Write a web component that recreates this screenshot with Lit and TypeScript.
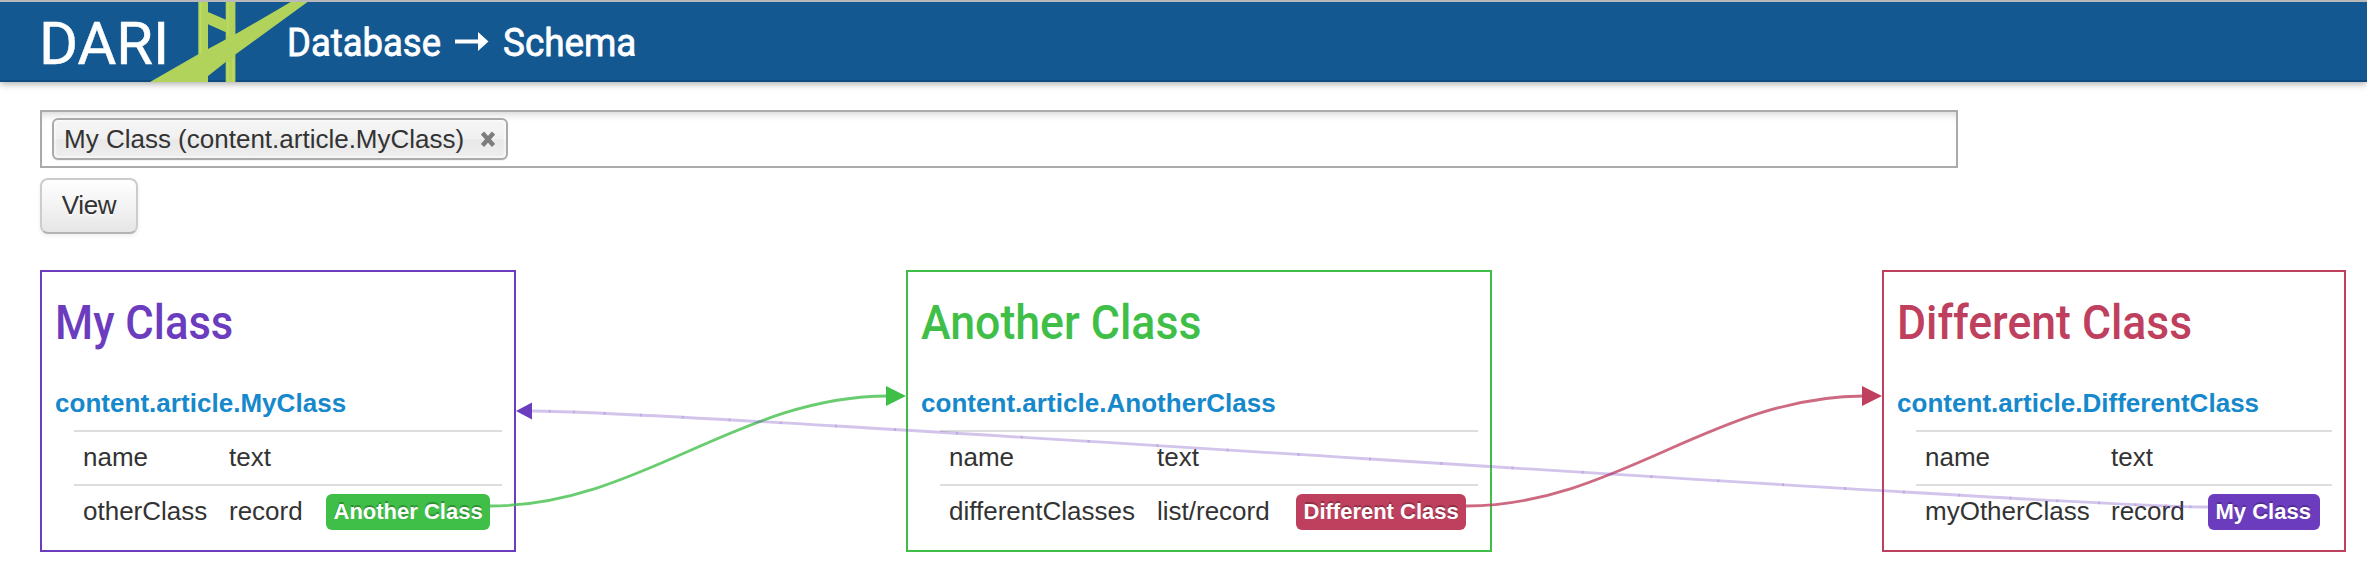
import { LitElement, html, svg, css } from "lit";
import { customElement, property } from "lit/decorators.js";

interface Field {
  name: string;
  type: string;
  target?: { label: string; tone: string };
}

interface SchemaClass {
  tone: string;
  title: string;
  path: string;
  fields: Field[];
}

const CLASSES: SchemaClass[] = [
  {
    tone: "purple",
    title: "My Class",
    path: "content.article.MyClass",
    fields: [
      { name: "name", type: "text" },
      { name: "otherClass", type: "record", target: { label: "Another Class", tone: "green" } },
    ],
  },
  {
    tone: "green",
    title: "Another Class",
    path: "content.article.AnotherClass",
    fields: [
      { name: "name", type: "text" },
      { name: "differentClasses", type: "list/record", target: { label: "Different Class", tone: "red" } },
    ],
  },
  {
    tone: "red",
    title: "Different Class",
    path: "content.article.DifferentClass",
    fields: [
      { name: "name", type: "text" },
      { name: "myOtherClass", type: "record", target: { label: "My Class", tone: "purple" } },
    ],
  },
];

@customElement("schema-card")
export class SchemaCard extends LitElement {
  @property({ attribute: false }) data!: SchemaClass;

  static styles = css`
    :host { display: block; }
    .card {
      box-sizing: border-box;
      height: 282px;
      border: 2px solid var(--tone);
      padding: 23px 12px 0 13px;
      color: #333;
      font: 26px/36px "Liberation Sans", Arial, sans-serif;
      white-space: nowrap;
    }
    .purple { --tone: #6c3cbf; --c1: 146px; --c2: 97px; --sx: 0.89; width: 476px; }
    .green { --tone: #3fbf48; --c1: 208px; --c2: 139px; --sx: 0.911; width: 586px; }
    .red { --tone: #bf405e; --c1: 186px; --c2: 97px; --sx: 0.908; width: 464px; }
    .title {
      margin: 0;
      color: var(--tone);
      font: 500 49px/56px Roboto, sans-serif;
      transform: scaleX(var(--sx));
      transform-origin: 0 0;
    }
    .path {
      margin: 34px 0 0;
      color: #1688cc;
      font-weight: bold;
      height: 45px;
      line-height: 36px;
      letter-spacing: 0.03px;
    }
    .row {
      display: grid;
      grid-template-columns: var(--c1) var(--c2) max-content;
      box-sizing: border-box;
      height: 54px;
      margin-left: 19px;
      padding: 7px 0 0 9px;
      border-top: 2px solid #ddd;
    }
    .badge {
      box-sizing: border-box;
      height: 36px;
      margin-top: 1px;
      padding: 0 7.5px;
      border-radius: 6px;
      color: #fff;
      font-size: 22px;
      font-weight: bold;
      line-height: 36px;
      text-shadow: 0 -2px 0 rgba(0, 0, 0, 0.25);
    }
    .to-purple { background: #6c3cbf; padding-right: 9px; }
    .to-green { background: #3fbf48; }
    .to-red { background: #bf405e; }
  `;

  render() {
    const d = this.data;
    return html`<section class="card ${d.tone}">
      <h2 class="title">${d.title}</h2>
      <div class="path">${d.path}</div>
      ${d.fields.map(
        (f) => html`<div class="row">
          <span>${f.name}</span><span>${f.type}</span>
          ${f.target ? html`<span class="badge to-${f.target.tone}">${f.target.label}</span>` : ""}
        </div>`
      )}
    </section>`;
  }
}

const cubic = (a: number, b: number, c: number, d: number, t: number) =>
  (1 - t) ** 3 * a + 3 * (1 - t) ** 2 * t * b + 3 * (1 - t) * t * t * c + t ** 3 * d;

// Joints of the long link, evenly spaced along the curve parameter.
const JOINTS = Array.from({ length: 31 }, (_, i) => {
  const t = (i + 1) / 32;
  return { x: cubic(532, 682, 2058, 2208, t), y: cubic(411, 411, 507, 507, t) };
});

@customElement("app-root")
export class AppRoot extends LitElement {
  static styles = css`
    :host {
      display: block;
      position: relative;
      height: 570px;
      overflow: hidden;
      background: #fff;
      color: #333;
      font: 26px/36px "Liberation Sans", Arial, sans-serif;
    }
    .header {
      box-sizing: border-box;
      display: flex;
      height: 82px;
      border-top: 2px solid #b9b9b9;
      background: #145892;
      box-shadow: inset 0 -2px 0 #0f4b81, 0 1px 8px rgba(0, 0, 0, 0.4);
      color: #fff;
      font-family: Roboto, sans-serif;
      white-space: nowrap;
    }
    .brand {
      width: 150px;
      padding-left: 39px;
      box-sizing: border-box;
      font-size: 59px;
      line-height: 83px;
      -webkit-text-stroke: 0.5px #fff;
    }
    .brand span, .crumb span { display: inline-block; transform-origin: 0 50%; }
    .brand span { transform: scaleX(1.01); }
    .bridge { display: block; width: 158px; height: 80px; margin-right: -21px; flex: none; }
    .crumb {
      display: flex;
      font-size: 39px;
      font-weight: 400;
      line-height: 82px;
      -webkit-text-stroke: 0.8px #fff;
    }
    .db { width: 168px; transform: scaleX(0.935); }
    .arrow { width: 34px; height: 80px; margin-right: 14px; }
    .schema { transform: scaleX(0.945); }
    .picker {
      box-sizing: border-box;
      display: flex;
      width: 1918px;
      height: 58px;
      margin: 28px 0 10px 40px;
      padding: 6px 10px;
      border: 2px solid #aaa;
      box-shadow: inset 0 8px 8px -6px rgba(0, 0, 0, 0.18);
    }
    .tag {
      box-sizing: border-box;
      display: flex;
      align-items: center;
      justify-content: space-between;
      width: 456px;
      height: 42px;
      padding: 0 10px 0 10px;
      border: 2px solid #aaa;
      border-radius: 6px;
      background: linear-gradient(#f4f4f4 20%, #f0f0f0 50%, #e8e8e8 52%, #eee);
      box-shadow: inset 0 0 2px 2px #fff8, 0 1px 1px rgba(0, 0, 0, 0.06);
      white-space: nowrap;
    }
    .close { width: 16px; height: 18px; }
    .view {
      box-sizing: border-box;
      display: block;
      width: 98px;
      height: 56px;
      margin: 0 0 36px 40px;
      padding: 0 0 2px;
      border: 2px solid #ccc;
      border-bottom-color: #b3b3b3;
      border-radius: 8px;
      background: linear-gradient(#fff, #e6e6e6);
      box-shadow: 0 2px 4px rgba(0, 0, 0, 0.07);
      color: #333;
      font: inherit;
      letter-spacing: -0.3px;
      text-shadow: 0 2px 2px rgba(255, 255, 255, 0.75);
    }
    .diagram { display: flex; gap: 390px; margin-left: 40px; }
    .links { position: absolute; left: 0; top: 0; pointer-events: none; }
  `;

  render() {
    return html`
      <header class="header">
        <div class="brand"><span>DARI</span></div>
        <svg class="bridge" viewBox="150 2 158 80">
          <g fill="#b2d35b">
            <path d="M150 82 198.3 54.3 235.3 34.3 290.7 2H307.5L235.3 54.5 208 76V82Z" />
            <path d="M198.3 2h9.7v80h-9.7zM225.7 2h9.7v80h-9.7zM208 12l18 7.7v12.6l-18-8z" />
          </g>
          <path d="M200.5 2V54M228 2V36M228 62V82M233 58V82" stroke="#bfdc62" stroke-width="1.5" />
        </svg>
        <div class="crumb">
          <span class="db">Database</span>
          <svg class="arrow" viewBox="0 0 34 80">
            <path d="M0 39.5H26" stroke="#fff" stroke-width="4" />
            <path d="M23 30L33.5 39.5 23 49Z" fill="#fff" />
          </svg>
          <span class="schema">Schema</span>
        </div>
      </header>
      <div class="picker">
        <div class="tag">
          <span>My Class (content.article.MyClass)</span>
          <svg class="close" viewBox="0 0 16 18">
            <path d="M2.5 3L13.5 15.5M13.5 3L2.5 15.5" stroke="#7d7d7d" stroke-width="4.4" />
          </svg>
        </div>
      </div>
      <button class="view">View</button>
      <main class="diagram">
        ${CLASSES.map((c) => html`<schema-card .data=${c}></schema-card>`)}
      </main>
      <svg class="links" width="2367" height="570" fill="none" stroke-width="2.8">
        <path d="M490 506C640 506 738 396 888 396" stroke="#3fbf48" stroke-opacity=".78" />
        <path d="M1466 506C1616 506 1714 396 1864 396" stroke="#bf405e" stroke-opacity=".78" />
        <path d="M532 411C682 411 2058 507 2208 507" stroke="#6c3cbf" stroke-opacity=".3" />
        ${JOINTS.map((p) => svg`<rect x=${p.x - 1} y=${p.y - 1.5} width="2" height="3" fill="#6c3cbf" fill-opacity=".2" />`)}
        <path d="M886 386L906 396L886 406Z" fill="#3fbf48" />
        <path d="M1862 386L1882 396L1862 406Z" fill="#bf405e" />
        <path d="M532 402.5L516 411L532 419.5Z" fill="#6c3cbf" />
      </svg>
    `;
  }
}
